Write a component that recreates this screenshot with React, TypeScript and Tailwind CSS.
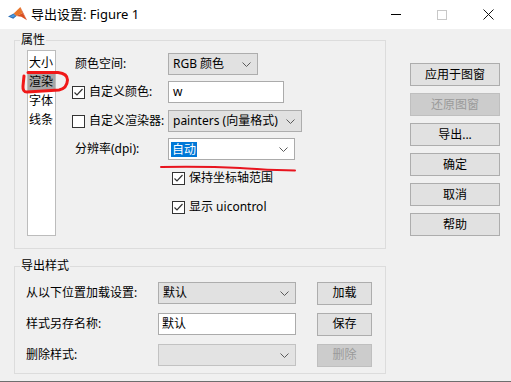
import React from "react";

const Chevron = () => (
  <svg width="9" height="5" viewBox="0 0 9 5" className="shrink-0">
    <polyline points="0.5,0.5 4.5,4.5 8.5,0.5" fill="none" stroke="#5a5a5a" strokeWidth="1" />
  </svg>
);

const Check = ({ checked }: { checked: boolean }) => (
  <div className="w-[13px] h-[13px] border border-[#333333] bg-white shrink-0 flex items-center justify-center">
    {checked && (
      <svg width="11" height="11" viewBox="0 0 11 11">
        <polyline points="1.5,5.5 4,8 9.5,2" fill="none" stroke="#333333" strokeWidth="1.2" />
      </svg>
    )}
  </div>
);

const Dropdown = ({ w, text, disabled }: { w: string; text: string; disabled?: boolean }) => (
  <div
    className={
      w +
      " h-[22px] flex items-center justify-between pl-[4px] pr-[6px] border " +
      (disabled ? "bg-[#e3e3e3] border-[#c2c2c2]" : "bg-[#e1e1e1] border-[#adadad]")
    }
  >
    <span className="whitespace-nowrap">{text}</span>
    <Chevron />
  </div>
);

const Btn = ({ text, disabled, w }: { text: string; disabled?: boolean; w: string }) => (
  <div
    className={
      w +
      " h-[23px] flex items-center justify-center border " +
      (disabled ? "bg-[#cccccc] border-[#bfbfbf] text-[#9a9a9a]" : "bg-[#e1e1e1] border-[#adadad] text-black")
    }
  >
    {text}
  </div>
);

const MatlabIcon = () => (
  <svg width="19" height="16" viewBox="0 0 20 16">
    <polygon points="0,10.5 6,7.5 9,10 5.5,13" fill="#2f6fb5" />
    <polygon points="2,11 6,8.5 7.5,10 5.5,11.5" fill="#4b9de0" />
    <polygon points="6,7.5 13,0.5 15.5,7 9,10" fill="#e9762b" />
    <polygon points="13,0.5 20,14.5 15.5,7" fill="#c4371a" />
    <polygon points="15.5,7 20,14.5 14,11 9,10" fill="#d94f20" />
  </svg>
);

export default function App() {
  return (
    <div className="relative w-[511px] h-[382px] bg-[#f0f0f0] border-b border-[#6e6e6e] overflow-hidden text-[12px] leading-[16px] text-black font-['Noto_Sans','Noto_Sans_CJK_SC',sans-serif]">
      {/* Title bar */}
      <div className="h-[29px] bg-white flex items-center">
        <div className="ml-[8px] mt-[-1px]">
          <MatlabIcon />
        </div>
        <div className="ml-[4px] text-[13px] mt-[-2px]">导出设置: Figure 1</div>
        <div className="ml-auto flex h-full">
          <div className="w-[46px] h-full flex items-center justify-center">
            <div className="w-[10px] h-px bg-black" />
          </div>
          <div className="w-[46px] h-full flex items-center justify-center">
            <div className="w-[10px] h-[10px] border border-[#c8c8c8]" />
          </div>
          <div className="w-[46px] h-full flex items-center justify-center">
            <svg width="11" height="11" viewBox="0 0 11 11">
              <line x1="0.5" y1="0.5" x2="10.5" y2="10.5" stroke="#111" strokeWidth="1" />
              <line x1="10.5" y1="0.5" x2="0.5" y2="10.5" stroke="#111" strokeWidth="1" />
            </svg>
          </div>
        </div>
      </div>

      {/* Body */}
      <div className="flex">
        <div className="pl-[14px] flex flex-col">
          {/* 属性 group */}
          <div className="relative mt-[11px] w-[372px] h-[209px] border border-[#dcdcdc]">
            <div className="absolute top-[-9px] left-[5px] px-[1px] bg-[#f0f0f0]">属性</div>
            <div className="flex pt-[9px] pl-[12px]">
              <div className="w-[29px] h-[186px] bg-white border border-[#bcbcbc] pt-[2px] flex flex-col">
                <div className="h-[19px] pl-[1px] flex items-center">大小</div>
                <div className="h-[19px] pl-[1px] flex items-center bg-[#a6a6a6]">渲染</div>
                <div className="h-[19px] pl-[1px] flex items-center">字体</div>
                <div className="h-[19px] pl-[1px] flex items-center">线条</div>
              </div>
              <div className="ml-[16px] mt-[3px] flex flex-col">
                <div className="h-[22px] flex items-center">
                  <div className="w-[96px] pl-[3px]">颜色空间:</div>
                  <Dropdown w="w-[90px]" text="RGB 颜色" />
                </div>
                <div className="mt-[6px] h-[22px] flex items-center">
                  <div className="w-[96px] flex items-center gap-[4px]">
                    <Check checked />
                    <span>自定义颜色:</span>
                  </div>
                  <div className="w-[116px] h-[22px] bg-white border border-[#ababab] flex items-center pl-[4px]">w</div>
                </div>
                <div className="mt-[7px] h-[22px] flex items-center">
                  <div className="w-[96px] flex items-center gap-[4px]">
                    <Check checked={false} />
                    <span className="whitespace-nowrap">自定义渲染器:</span>
                  </div>
                  <Dropdown w="w-[134px]" text="painters (向量格式)" />
                </div>
                <div className="mt-[6px] h-[22px] flex items-center">
                  <div className="w-[96px] pl-[3px]">分辨率(dpi):</div>
                  <div className="w-[127px] h-[22px] bg-white border border-[#ababab] flex items-center justify-between pl-[2px] pr-[6px]">
                    <span className="bg-[#0078d7] text-white px-[1px] leading-[15px]">自动</span>
                    <Chevron />
                  </div>
                </div>
                <div className="mt-[10px] h-[16px] pl-[100px] flex items-center gap-[4px]">
                  <Check checked />
                  <span>保持坐标轴范围</span>
                </div>
                <div className="mt-[13px] h-[16px] pl-[100px] flex items-center gap-[4px]">
                  <Check checked />
                  <span>显示 uicontrol</span>
                </div>
              </div>
            </div>
          </div>

          {/* 导出样式 group */}
          <div className="relative mt-[17px] w-[372px] h-[108px] border border-[#dcdcdc]">
            <div className="absolute top-[-9px] left-[5px] px-[1px] bg-[#f0f0f0]">导出样式</div>
            <div className="pt-[15px] pl-[11px] flex flex-col gap-[9px]">
              <div className="h-[22px] flex items-center">
                <div className="w-[132px] whitespace-nowrap">从以下位置加载设置:</div>
                <Dropdown w="w-[138px]" text="默认" />
                <div className="ml-[21px]">
                  <Btn w="w-[55px]" text="加载" />
                </div>
              </div>
              <div className="h-[22px] flex items-center">
                <div className="w-[132px]">样式另存名称:</div>
                <div className="w-[138px] h-[22px] bg-white border border-[#ababab] flex items-center pl-[3px]">默认</div>
                <div className="ml-[21px]">
                  <Btn w="w-[55px]" text="保存" />
                </div>
              </div>
              <div className="h-[22px] flex items-center">
                <div className="w-[132px]">删除样式:</div>
                <Dropdown w="w-[138px]" text="" disabled />
                <div className="ml-[21px]">
                  <Btn w="w-[55px]" text="删除" disabled />
                </div>
              </div>
            </div>
          </div>
        </div>

        {/* Right buttons */}
        <div className="ml-[24px] mt-[34px] flex flex-col gap-[7px]">
          <Btn w="w-[90px]" text="应用于图窗" />
          <Btn w="w-[90px]" text="还原图窗" disabled />
          <Btn w="w-[90px]" text="导出..." />
          <Btn w="w-[90px]" text="确定" />
          <Btn w="w-[90px]" text="取消" />
          <Btn w="w-[90px]" text="帮助" />
        </div>
      </div>

      {/* Red hand-drawn annotations */}
      <svg className="absolute inset-0 pointer-events-none" width="511" height="382" viewBox="0 0 511 382">
        <path
          d="M28 72.5 L58 72.5 Q67.5 73.5 67.5 80 Q67 88.5 59 90 L27 92 Q22.5 92 23 86 L24 76"
          fill="none"
          stroke="#f01818"
          strokeWidth="3"
          strokeLinecap="round"
          strokeLinejoin="round"
        />
        <path
          d="M161 167 C 195 166.5, 220 167, 240 168 S 270 170.5, 295 170.5"
          fill="none"
          stroke="#e8141e"
          strokeWidth="2"
          strokeLinecap="round"
        />
      </svg>
    </div>
  );
}
